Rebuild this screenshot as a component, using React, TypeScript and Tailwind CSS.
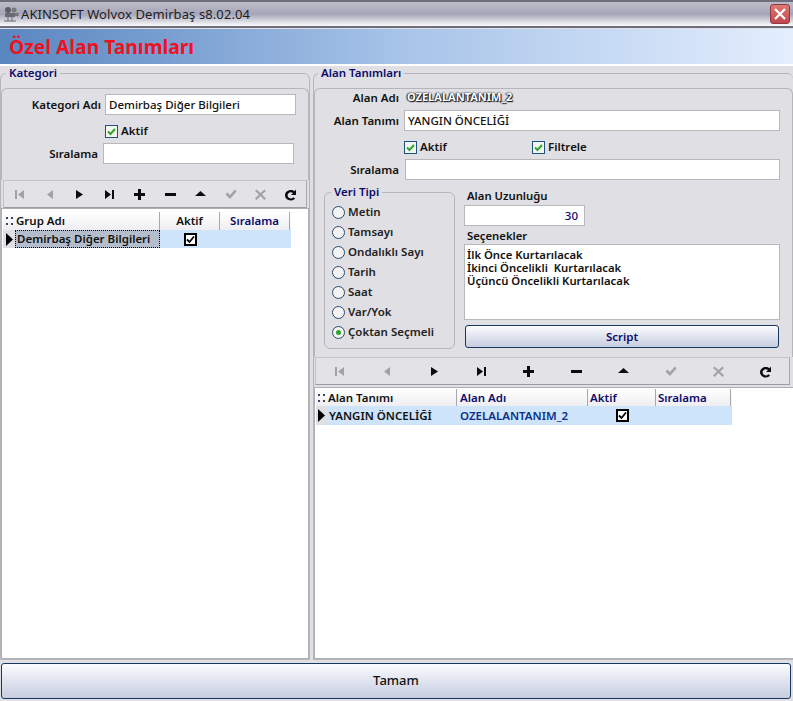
import React from 'react';

const font = { fontFamily: '"Noto Sans", "Open Sans", sans-serif' };

const Check = ({ label, className = '' }: { label: string; className?: string }) => (
  <label className={`flex items-center gap-[3px] ${className}`}>
    <span className="flex h-[13px] w-[13px] items-center justify-center border border-[#1c5180] bg-[#f2f6ee]">
      <svg viewBox="0 0 11 11" className="h-[11px] w-[11px]">
        <path d="M2 5.5 L4.5 8 L9 3" fill="none" stroke="#2fa52f" strokeWidth="2" />
      </svg>
    </span>
    <span className="text-[11.5px] font-semibold leading-[14px] text-[#111]">{label}</span>
  </label>
);

const Radio = ({ label, on }: { label: string; on?: boolean }) => (
  <div className="flex h-[20px] items-center gap-[3px]">
    <span className="flex h-[13px] w-[13px] items-center justify-center rounded-full border border-[#2a4a68] bg-[#f4f4f6]">
      {on && <span className="h-[5px] w-[5px] rounded-full bg-[#2fa52f]" />}
    </span>
    <span className="text-[11.5px] font-semibold text-[#222]">{label}</span>
  </div>
);

const Field = ({ className = '', children }: { className?: string; children?: React.ReactNode }) => (
  <div className={`flex h-[21px] items-center border border-[#b8b8b8] bg-white px-[3px] text-[11.5px] font-medium text-[#111] ${className}`}>
    {children}
  </div>
);

const navIcons = [
  { d: 'M2 2h2v9H2z M11 2v9L5 6.500z', on: false },
  { d: 'M10 2v9L4 6.500z', on: false },
  { d: 'M3 2v9l7-4.500z', on: true },
  { d: 'M2 2v9l6-4.500z M9 2h2v9H9z', on: true },
  { d: 'M5 1h3v4h4v3H8v4H5V8H1V5h4z', on: true },
  { d: 'M1 5h11v3H1z', on: true },
  { d: 'M6.500 3l5.500 5H1z', on: true },
  { d: 'M1.500 6.500l2-2 2.500 2.500 5-5.500 1.500 2L6 11z', on: false },
  { d: 'M2.500 1.500L6.500 5l4-3.500 1.500 1.500L8 6.500l4 4-1.500 1.500-4-4-4 4L1 10.500l4-4L1 3z', on: false },
  { d: 'M12 1.500v5.500H7l2-2c-.7-.6-1.500-.8-2.200-.8C5 4.200 3.600 5.500 3.600 7.300s1.400 3.100 3.200 3.100c1 0 1.900-.4 2.500-1.200l1.800 1.400c-1 1.200-2.500 1.900-4.300 1.900C3.600 12.500 1 10.200 1 7.300S3.600 2 6.800 2c1.500 0 2.900.5 3.700 1.200z', on: true },
];

const Toolbar = ({ className }: { className: string }) => (
  <div className={`flex h-[28px] shrink-0 items-center border border-[#c4c4c8] border-b-[#9c9ca0] border-r-[#a8a8ac] bg-[#e3e2e6] ${className}`}>
    {navIcons.map((ic) => (
      <div key={ic.d} className="flex flex-1 justify-center">
        <svg viewBox="0 0 13 13" className="h-[13px] w-[13px]">
          <path d={ic.d} fill={ic.on ? '#0c0c0c' : '#a2a2a6'} />
        </svg>
      </div>
    ))}
  </div>
);

const BoxCheck = () => (
  <span className="flex h-[13px] w-[13px] items-center justify-center border-2 border-black bg-white">
    <svg viewBox="0 0 9 9" className="h-[9px] w-[9px]">
      <path d="M1 4.500 L3.500 7 L8 1.500" fill="none" stroke="#000" strokeWidth="1.800" />
    </svg>
  </span>
);

const Grip = () => (
  <div className="grid h-[8px] w-[7px] grid-cols-[2px_2px] content-between justify-between">
    <span className="h-[2px] w-[2px] bg-[#33466a]" />
    <span className="h-[2px] w-[2px] bg-[#33466a]" />
    <span className="h-[2px] w-[2px] bg-[#33466a]" />
    <span className="h-[2px] w-[2px] bg-[#33466a]" />
  </div>
);

const Arrow = () => (
  <svg viewBox="0 0 7 13" className="h-[13px] w-[7px]">
    <path d="M0 0v13l7-6.500z" fill="#000" />
  </svg>
);

const Script = ({ className, children }: { className: string; children: React.ReactNode }) => (
  <button className={`flex items-center justify-center rounded-[3px] border border-[#17375e] bg-gradient-to-b from-[#fbfcff] to-[#c7cde0] ${className}`}>
    {children}
  </button>
);

const Legend = ({ children, className = '' }: { children: string; className?: string }) => (
  <legend className={`px-[3px] text-[11.5px] font-semibold leading-[14px] text-[#0b0b6b] ${className}`}>{children}</legend>
);

export default function App() {
  return (
    <div style={font} className="flex h-[701px] w-[793px] flex-col overflow-hidden bg-[#e0dfe3]">
      {/* title bar */}
      <div className="flex h-[28px] shrink-0 items-center border-y-2 border-[#6d6d7c] bg-gradient-to-b from-[#bdbdc9] via-[#a5a5b8] to-[#fbfbfd] pl-[3px] pr-[3px]">
        <svg viewBox="0 0 16 16" className="h-[16px] w-[16px] shrink-0">
          <circle cx="5" cy="4" r="3" fill="#5c5c66" />
          <circle cx="11" cy="4" r="2.500" fill="#77777f" />
          <path d="M2 7h10v4H2z" fill="#6a6a72" />
          <path d="M12 8l3-1v3l-3-1z M5 11v4 M9 11v4 M1 15h12" fill="#8a8a90" stroke="#6a6a72" />
        </svg>
        <span className="ml-[2px] flex-1 pt-px text-[13px] leading-none tracking-[0.1px] text-[#1d1d22]">AKINSOFT Wolvox Demirbaş s8.02.04</span>
        <div className="flex h-[20px] w-[20px] items-center justify-center rounded-[3px] border border-[#8e3a40] bg-gradient-to-b from-[#e07a74] to-[#c0474e]">
          <svg viewBox="0 0 14 14" className="h-[14px] w-[14px]">
            <path d="M2 2 L12 12 M12 2 L2 12" stroke="#fff" strokeWidth="2.200" />
          </svg>
        </div>
      </div>
      {/* header band */}
      <div className="mt-px flex h-[35px] shrink-0 items-center bg-gradient-to-r from-[#5a86c0] via-[#a6c3e8] to-[#e4eefd] pl-[9px] text-[19.300px] font-bold leading-none text-[#ee1122]">
        Özel Alan Tanımları
      </div>
      <div className="h-[2px] shrink-0 bg-white" />

      <div className="flex h-[594px] shrink-0 gap-[3px]">
        {/* left panel */}
        <fieldset className="flex h-full w-[310px] shrink-0 flex-col rounded-t-md border border-[#b6b6ba]">
          <Legend className="ml-[5px]">Kategori</Legend>
          <div className="mt-[8px] h-[92px] rounded-t-md border border-b-0 border-[#b6b6ba]">
            <div className="mt-[5px] flex items-center">
              <span className="w-[99px] text-right text-[11.5px] font-semibold text-[#111]">Kategori Adı</span>
              <Field className="ml-[4px] w-[191px]">Demirbaş Diğer Bilgileri</Field>
            </div>
            <Check label="Aktif" className="ml-[103px] mt-[9px]" />
            <div className="mt-[5px] flex items-center">
              <span className="w-[96px] text-right text-[11.5px] font-semibold text-[#111]">Sıralama</span>
              <Field className="ml-[5px] w-[191px]" />
            </div>
          </div>
          <Toolbar className="mx-[2px]" />
          <div className="flex-1 border border-[#b0b0b4] bg-white pl-px pt-[3px]">
            <div className="flex h-[18px] w-[288px] items-center bg-gradient-to-b from-white to-[#eeeef2] text-[11.5px] font-semibold">
              <div className="flex w-[12px] justify-center"><Grip /></div>
              <span className="w-[145px] border-r border-[#a8a8ac] pl-px text-[#111]">Grup Adı</span>
              <span className="w-[60px] border-r border-[#a8a8ac] text-center text-[#111]">Aktif</span>
              <span className="w-[70px] border-r border-[#a8a8ac] text-center text-[#0b0b6b]">Sıralama</span>
            </div>
            <div className="flex h-[18px] w-[288px] items-center bg-[#cde4fa] text-[11.5px] font-semibold">
              <div className="flex h-full w-[12px] items-center justify-center bg-[#e0dfe3]"><Arrow /></div>
              <span className="flex h-full w-[145px] items-center border border-dotted border-black bg-[#b4bdcb] pl-px text-[#111]">Demirbaş Diğer Bilgileri</span>
              <span className="flex w-[60px] justify-center"><BoxCheck /></span>
            </div>
          </div>
        </fieldset>

        {/* right panel */}
        <fieldset className="flex h-full min-w-0 flex-1 flex-col rounded-t-md border border-r-0 border-[#b6b6ba]">
          <Legend className="ml-[4px]">Alan Tanımları</Legend>
          <div className="mt-[8px] h-[269px] shrink-0 rounded-t-md border border-b-0 border-[#b6b6ba]">
            <div className="flex h-[17px] items-center">
              <span className="w-[84px] text-right text-[11.5px] font-semibold text-[#111]">Alan Adı</span>
              <span className="ml-[8px] text-[11px] font-bold text-white [text-shadow:0_0_2px_#111,1px_1px_1px_#111,-1px_0_1px_#333]">OZELALANTANIM_2</span>
            </div>
            <div className="mt-[4px] flex items-center">
              <span className="w-[84px] text-right text-[11.5px] font-semibold text-[#111]">Alan Tanımı</span>
              <Field className="ml-[5px] w-[376px]">YANGIN ÖNCELİĞİ</Field>
            </div>
            <div className="ml-[89px] mt-[9px] flex">
              <Check label="Aktif" className="w-[128px]" />
              <Check label="Filtrele" />
            </div>
            <div className="mt-[5px] flex items-center">
              <span className="w-[84px] text-right text-[11.5px] font-semibold text-[#111]">Sıralama</span>
              <Field className="ml-[6px] w-[375px]" />
            </div>
            <div className="mt-[5px] flex">
              <fieldset className="ml-[9px] h-[164px] w-[131px] shrink-0 rounded-md border border-[#b6b6ba] pl-[7px]">
                <Legend className="-ml-px">Veri Tipi</Legend>
                <div className="mt-[3px]">
                  <Radio label="Metin" />
                  <Radio label="Tamsayı" />
                  <Radio label="Ondalıklı Sayı" />
                  <Radio label="Tarih" />
                  <Radio label="Saat" />
                  <Radio label="Var/Yok" />
                  <Radio label="Çoktan Seçmeli" on />
                </div>
              </fieldset>
              <div className="ml-[9px] flex w-[316px] flex-col pt-[3px]">
                <span className="ml-[3px] text-[11.300px] font-semibold leading-[15px] text-[#111]">Alan Uzunluğu</span>
                <Field className="mt-[2px] w-[121px] justify-end pr-[6px] !text-[#0b0b6b]">30</Field>
                <span className="ml-[3px] mt-[2px] text-[11.300px] font-semibold leading-[16px] text-[#111]">Seçenekler</span>
                <div className="h-[76px] border border-[#b8b8b8] bg-white px-[2px] pt-[3px] text-[11.300px] font-semibold leading-[13px] text-[#111]">
                  <div>İlk Önce Kurtarılacak</div>
                  <div>İkinci Öncelikli&nbsp; Kurtarılacak</div>
                  <div>Üçüncü Öncelikli Kurtarılacak</div>
                </div>
                <Script className="ml-px mt-[5px] h-[23px] w-[314px] text-[11.5px] font-semibold text-[#0b0b6b]">Script</Script>
              </div>
            </div>
          </div>
          <Toolbar className="ml-px mr-[3px]" />
          <div className="mt-[2px] flex-1 border border-r-0 border-[#b0b0b4] bg-white pl-px pt-px">
            <div className="flex h-[17px] w-[416px] items-center bg-gradient-to-b from-white to-[#eeeef2] text-[11.5px] font-semibold">
              <div className="flex w-[11px] justify-center"><Grip /></div>
              <span className="w-[130px] border-r border-[#a8a8ac] pl-px text-[#111]">Alan Tanımı</span>
              <span className="w-[131px] border-r border-[#a8a8ac] pl-[3px] text-[#0b0b6b]">Alan Adı</span>
              <span className="w-[68px] border-r border-[#a8a8ac] pl-[2px] text-[#0b0b6b]">Aktif</span>
              <span className="w-[75px] border-r border-[#a8a8ac] pl-[2px] text-[#0b0b6b]">Sıralama</span>
            </div>
            <div className="flex h-[19px] w-[416px] items-center bg-[#cde4fa] text-[11.5px] font-semibold">
              <div className="flex h-full w-[11px] items-center justify-center bg-[#e0dfe3]"><Arrow /></div>
              <span className="w-[130px] pl-[2px] text-[#111]">YANGIN ÖNCELİĞİ</span>
              <span className="w-[131px] pl-[3px] text-[#0b2f8a]">OZELALANTANIM_2</span>
              <span className="flex w-[68px] justify-center"><BoxCheck /></span>
            </div>
          </div>
        </fieldset>
      </div>

      <Script className="mx-px mt-[3px] h-[36px] w-[790px] text-[13px] font-medium text-[#111]">Tamam</Script>
    </div>
  );
}
